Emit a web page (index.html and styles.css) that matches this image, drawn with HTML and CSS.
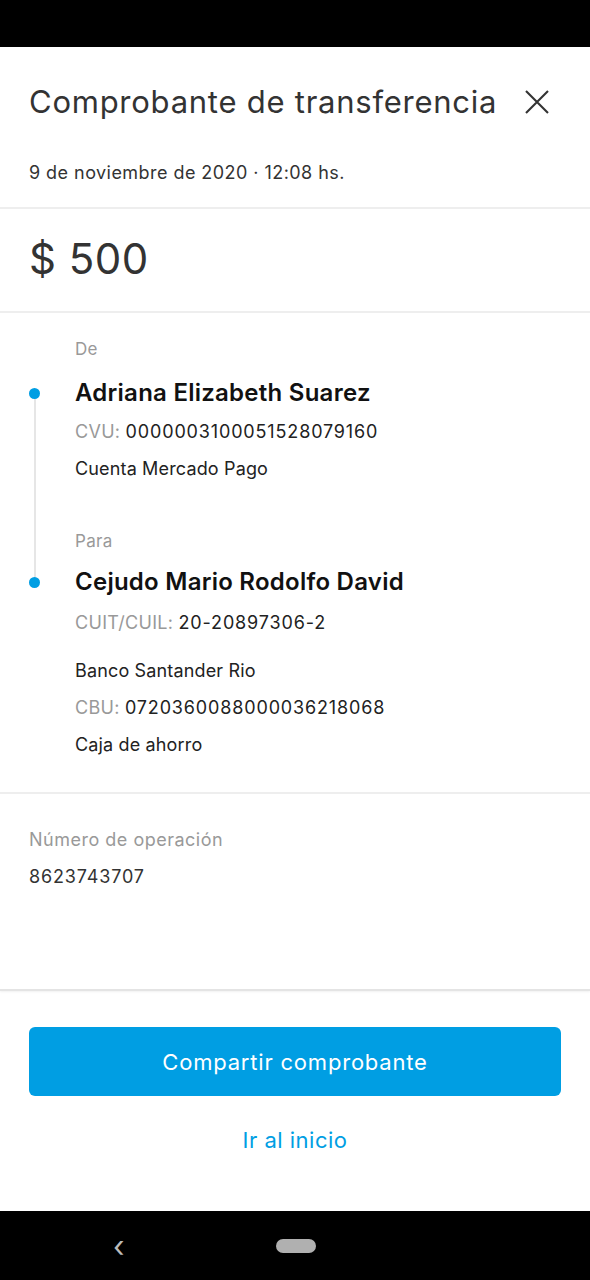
FILE: index.html
```html
<!DOCTYPE html>
<html lang="es">
<head>
<meta charset="utf-8">
<title>Comprobante de transferencia</title>
<link rel="stylesheet" href="styles.css">
</head>
<body>
<div class="screen">
  <div class="statusbar"></div>
  <main class="content">
    <header class="head">
      <div class="title-row">
        <h1 class="title">Comprobante de transferencia</h1>
        <svg class="close" width="24" height="24" viewBox="0 0 24 24"><path d="M1 1 L23 23 M23 1 L1 23" stroke="#333" stroke-width="2.1" fill="none"/></svg>
      </div>
      <p class="date">9 de noviembre de 2020 · 12:08 hs.</p>
    </header>
    <section class="amount">$ 500</section>
    <section class="parties">
      <div class="timeline-line"></div>
      <div class="party">
        <p class="label">De</p>
        <p class="name">Adriana Elizabeth Suarez</p>
        <p class="line"><span class="key">CVU:</span> <span class="num">0000003100051528079160</span></p>
        <p class="line">Cuenta Mercado Pago</p>
      </div>
      <div class="party to">
        <p class="label">Para</p>
        <p class="name">Cejudo Mario Rodolfo David</p>
        <p class="line"><span class="key">CUIT/CUIL:</span> <span class="num">20-20897306-2</span></p>
        <p class="line bank">Banco Santander Rio</p>
        <p class="line"><span class="key">CBU:</span> <span class="num">0720360088000036218068</span></p>
        <p class="line">Caja de ahorro</p>
      </div>
    </section>
    <section class="operation">
      <p class="label">Número de operación</p>
      <p class="value num">8623743707</p>
    </section>
    <footer class="actions">
      <button class="primary">Compartir comprobante</button>
      <button class="link">Ir al inicio</button>
    </footer>
  </main>
  <nav class="navbar">
    <span class="back">‹</span>
    <span class="home"></span>
  </nav>
</div>
</body>
</html>
```
FILE: styles.css
```css
* { box-sizing: border-box; margin: 0; padding: 0; }
html, body { width: 590px; height: 1280px; background: #fff; }
body { font-family: "Inter", "Open Sans", sans-serif; color: #333; }
.screen { display: flex; flex-direction: column; height: 1280px; }
.statusbar { height: 47px; background: #000; flex: none; }
.content { flex: 1; display: flex; flex-direction: column; }
.head { padding: 36px 29px 0 29px; height: 162px; border-bottom: 2px solid #eeeeee; }
.title-row { display: flex; justify-content: space-between; align-items: center; }
.title { font-weight: 400; font-size: 31px; line-height: 38px; color: #333; letter-spacing: 0.75px; }
.close { margin-right: 12px; width: 24px; height: 24px; }
.date { margin-top: 40px; font-size: 18px; line-height: 24px; color: #333; letter-spacing: 0.45px; }
.amount { height: 104px; padding: 22px 29px 0; font-size: 42px; line-height: 56px; color: #333; border-bottom: 2px solid #eeeeee; letter-spacing: 0.5px; }
.parties { position: relative; padding: 24px 29px 0 75px; height: 481px; border-bottom: 2px solid #eeeeee; }
.timeline-line { position: absolute; left: 34px; top: 80px; height: 188px; width: 2px; background: #e6e6e6; }
.party { display: flex; flex-direction: column; }
.party.to { margin-top: 48px; }
.label { font-size: 17px; line-height: 24px; color: #999; letter-spacing: 0.3px; }
.name { position: relative; margin-top: 18px; font-weight: 600; font-size: 24px; line-height: 28px; color: #111; letter-spacing: 0.25px; }
.party.to .name { margin-top: 15px; }
.name::before { content: ""; position: absolute; left: -46px; top: 9px; width: 11px; height: 11px; border-radius: 50%; background: #009ee3; }
.line { margin-top: 13px; font-size: 18px; line-height: 24px; color: #222; letter-spacing: 0.15px; }
.party.to .name + .line { margin-top: 15px; }
.line.bank { margin-top: 24px; }
.num { letter-spacing: 0.85px; }
.key { color: #999; letter-spacing: 0.3px; }
.operation { padding: 34px 29px 0; height: 197px; border-bottom: 2px solid #e4e4e4; box-shadow: 0 1px 2px rgba(0,0,0,0.06); }
.operation .label { font-size: 18px; color: #999; letter-spacing: 0.5px; }
.value { margin-top: 13px; font-size: 18px; line-height: 24px; color: #333; }
.actions { flex: 1; display: flex; flex-direction: column; align-items: stretch; padding: 36px 29px 0; }
.primary { height: 69px; border: none; border-radius: 6px; background: #009ee3; color: #fff; font-family: inherit; font-size: 22px; letter-spacing: 0.8px; }
.link { margin-top: 29px; border: none; background: none; color: #009ee3; font-family: inherit; font-size: 22px; line-height: 30px; letter-spacing: 0.5px; }
.navbar { height: 69px; flex: none; background: #000; display: flex; align-items: center; padding-left: 113px; }
.back { color: #bbb; font-size: 30px; line-height: 30px; width: 20px; }
.home { margin-left: 143px; width: 40px; height: 14px; border-radius: 7px; background: #b0b0b0; }
```
